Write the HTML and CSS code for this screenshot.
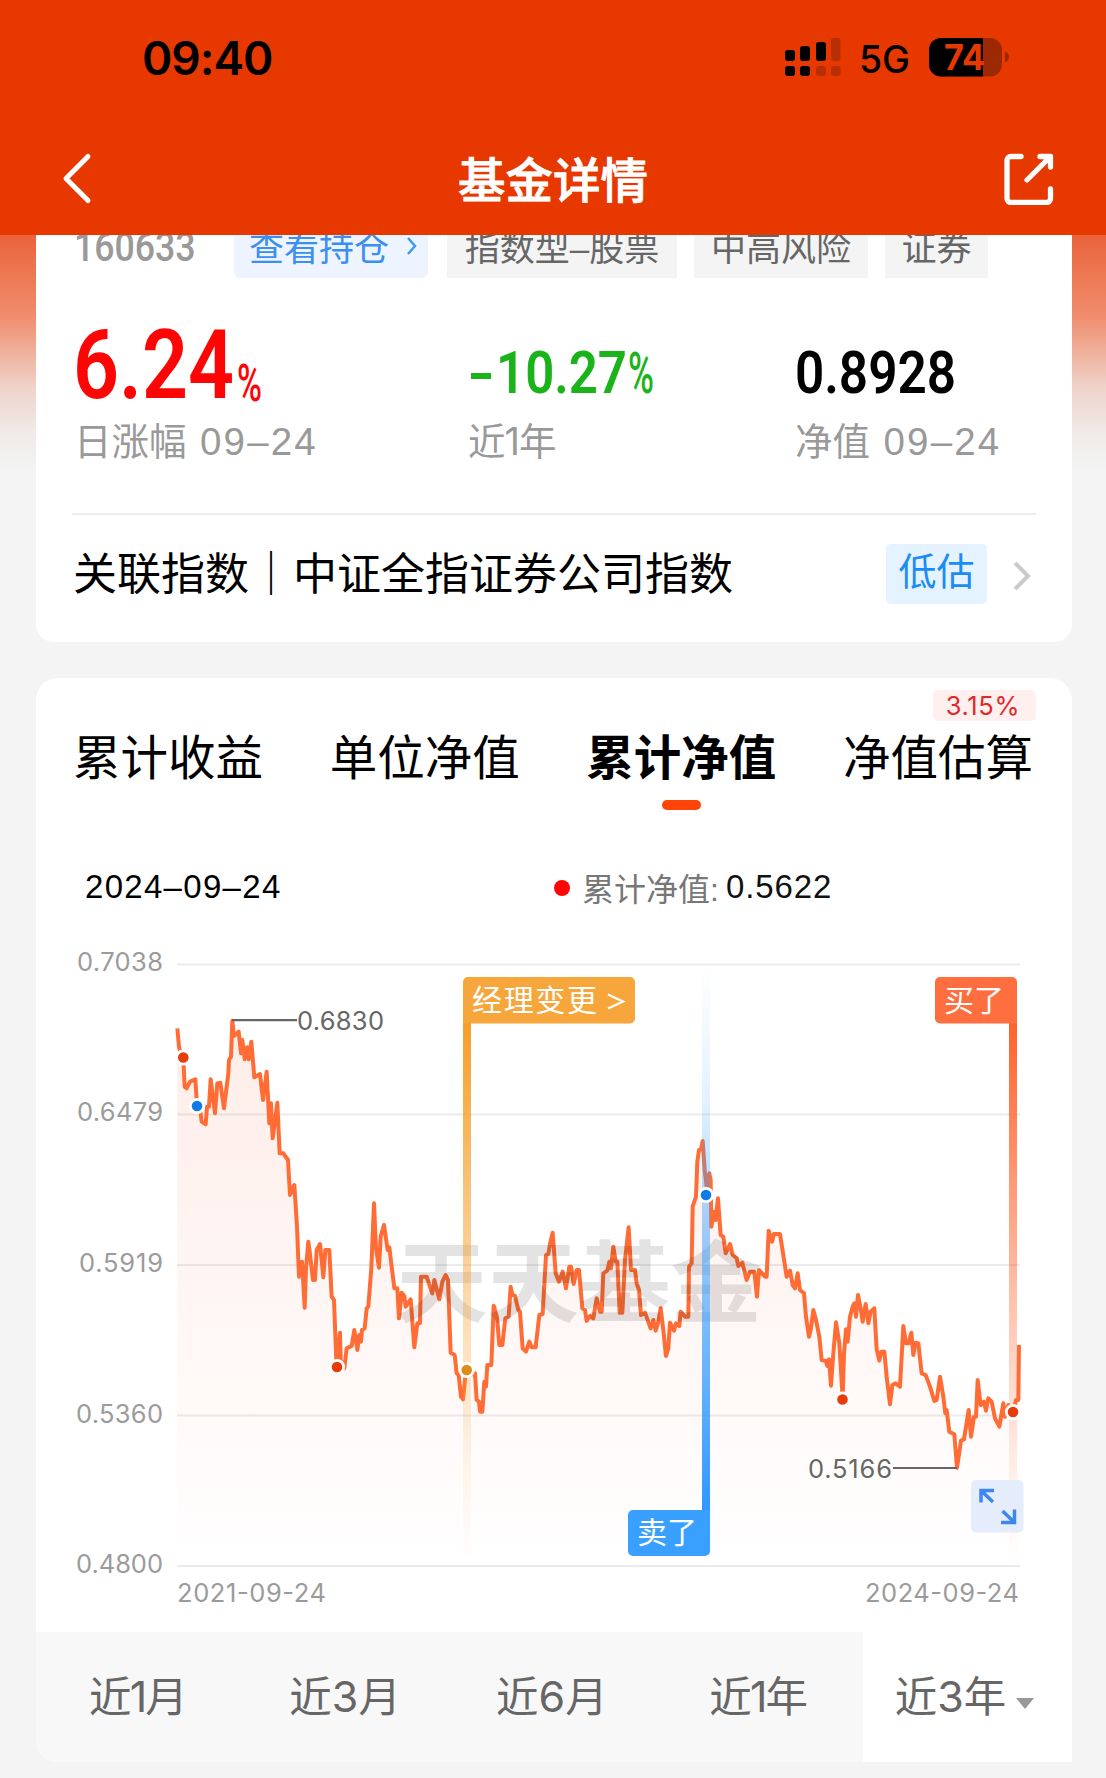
FILE: index.html
```html
<!DOCTYPE html>
<html lang="zh-CN">
<head>
<meta charset="utf-8">
<title>基金详情</title>
<link rel="stylesheet" href="styles.css">
</head>
<body>
<header class="topbar">
  <div class="status">
    <span class="clock">09:40</span>
    <svg class="status-icons" width="230" height="50" viewBox="782 32 230 50">
      <g fill="#000">
        <rect x="785" y="50" width="10" height="11" rx="3"/><rect x="800" y="46" width="10" height="15" rx="3"/><rect x="816" y="42" width="10" height="19" rx="3"/>
        <rect x="785" y="66" width="10" height="10" rx="3"/><rect x="800" y="66" width="10" height="10" rx="3"/>
      </g>
      <g fill="#b82e05">
        <rect x="831" y="38" width="9.500" height="23" rx="3"/><rect x="816" y="66" width="10" height="10" rx="3"/><rect x="831" y="66" width="9.500" height="10" rx="3"/>
      </g>
      <text x="859" y="73" class="net" textLength="51" lengthAdjust="spacingAndGlyphs">5G</text>
      <rect x="929" y="38" width="73" height="38.500" rx="12" fill="#9c2804"/>
      <path d="M983 38H941a12 12 0 0 0-12 12v14.500a12 12 0 0 0 12 12h42z" fill="#000"/>
      <path d="M1005 51.500q4 1.500 4 5.500t-4 5.500z" fill="#9c2804"/>
      <text x="944" y="70" class="batt" textLength="41" lengthAdjust="spacingAndGlyphs">74</text>
    </svg>
  </div>
  <nav class="nav">
    <svg width="32" height="54" viewBox="60 151 32 54" class="ico"><path d="M88 156.500 66 178.500l22 22" stroke-width="5"/></svg>
    <h1 class="title">基金详情</h1>
    <svg width="56" height="54" viewBox="1001 151 56 54" class="ico"><path d="M1021 156.500h-10a4 4 0 0 0-4 4v38a4 4 0 0 0 4 4h35.500a4 4 0 0 0 4-4V189M1040 156.500h10.500V167M1050 157l-23 23" stroke-width="5.300"/></svg>
  </nav>
</header>
<main class="page">
  <section class="card summary">
    <div class="tags">
      <span class="code"><span>160633</span></span>
      <span class="tag link">查看持仓<svg width="12" height="20" viewBox="0 0 12 20"><path d="M2 2l7 8-7 8" fill="none" stroke="#3a9df5" stroke-width="2.500"/></svg></span>
      <span class="tag type">指数型–股票</span>
      <span class="tag risk">中高风险</span>
      <span class="tag sector">证券</span>
    </div>
    <div class="stats">
      <div class="stat"><svg class="num" width="200" height="80" viewBox="0 0 200 80"><g fill="#fe0505"><text x="-1" y="74" class="big" textLength="161" lengthAdjust="spacingAndGlyphs">6.24</text><text x="163" y="77" class="pct" textLength="25" lengthAdjust="spacingAndGlyphs">%</text></g></svg><p>日涨幅 <i>09–24</i></p></div>
      <div class="stat"><svg class="num" width="200" height="80" viewBox="0 0 200 80"><g fill="#1ab41a"><rect x="3" y="49" width="20" height="6"/><text x="28" y="68.500" class="mid" textLength="131" lengthAdjust="spacingAndGlyphs">10.27</text><text x="160" y="68.500" class="pct mp" textLength="26" lengthAdjust="spacingAndGlyphs">%</text></g></svg><p>近<i class="one">1</i>年</p></div>
      <div class="stat"><svg class="num" width="200" height="80" viewBox="0 0 200 80"><text x="0" y="68.500" class="mid" textLength="161" lengthAdjust="spacingAndGlyphs">0.8928</text></svg><p>净值 <i>09–24</i></p></div>
    </div>
    <div class="index-row">
      <span class="index-name">关联指数｜中证全指证券公司指数</span>
      <span class="level">低估</span>
      <svg width="20" height="32" viewBox="0 0 20 32"><path d="M3 3l13 13L3 29" fill="none" stroke="#c9c9c9" stroke-width="4"/></svg>
    </div>
  </section>

  <section class="card trend">
    <div class="tabs">
      <span>累计收益</span><span>单位净值</span><span class="on">累计净值</span><span>净值估算<b class="badge">3.15%</b></span>
    </div>
    <div class="legend">
      <span class="date">2024–09–24</span><span class="dot"></span><span class="lname">累计净值:</span><span class="lval">0.5622</span>
    </div>
    <svg class="chart" width="1036" height="702" viewBox="36 930 1036 702">
      <defs>
        <linearGradient id="area" x1="0" y1="0" x2="0" y2="1"><stop offset="0" stop-color="#f4592a" stop-opacity=".11"/><stop offset="1" stop-color="#f4592a" stop-opacity="0"/></linearGradient>
        <linearGradient id="org" x1="0" y1="0" x2="0" y2="1"><stop offset="0" stop-color="#f59f2a"/><stop offset=".5" stop-color="#f59f2a" stop-opacity=".4"/><stop offset=".8" stop-color="#f59f2a" stop-opacity=".1"/><stop offset="1" stop-color="#f59f2a" stop-opacity="0"/></linearGradient>
        <linearGradient id="red" x1="0" y1="0" x2="0" y2="1"><stop offset="0" stop-color="#ff622b"/><stop offset=".5" stop-color="#ff622b" stop-opacity=".4"/><stop offset=".8" stop-color="#ff622b" stop-opacity=".1"/><stop offset="1" stop-color="#ff622b" stop-opacity="0"/></linearGradient>
        <linearGradient id="blu" x1="0" y1="1" x2="0" y2="0"><stop offset="0" stop-color="#2f98ff"/><stop offset=".5" stop-color="#3a9fff" stop-opacity=".5"/><stop offset=".75" stop-color="#3a9fff" stop-opacity=".14"/><stop offset="1" stop-color="#3a9fff" stop-opacity="0"/></linearGradient>
      </defs>
      <path d="M177 964.500H1020M177 1114.500H1020M177 1265H1020M177 1415.500H1020M177 1566H1020" stroke="#ebebeb" stroke-width="1.800"/>
      <g transform="translate(160 940) scale(.33333)">
        <path id="nav-fill" fill="url(#area)" d="M52 1878L52 265 57 320 63 345 70 355 74 440 80 445 90 425 106 418 111 495 122 520 125 545 137 553 141 500 147 500 152 418 165 520 172 430 181 428 192 505 205 400 207 360 213 350 217 242 222 288 236 275 243 340 247 300 254 358 261 322 266 358 274 305 283 412 300 402 309 480 320 395 328 550 333 490 338 595 352 488 359 640 370 640 384 660 390 765 403 735 411 860 417 1010 426 965 434 1103 438 985 445 905 459 1020 465 1020 470 930 480 912 490 1012 496 930 508 930 515 1070 522 1080 530 1290 540 1178 553 1285 560 1225 575 1218 583 1170 592 1230 606 1170 614 1165 625 1100 634 985 642 790 657 983 662 890 672 855 683 930 703 1045 712 1045 717 1135 725 1058 752 1078 763 1222 772 1150 783 1010 800 1010 817 1060 838 1078 857 1005 864 1020 872 1238 884 1245 909 1378 917 1300 945 1300 960 1415 967 1415 982 1275 994 1275 1001 1097 1018 1215 1027 1215 1052 1040 1080 1115 1098 1235 1127 1222 1138 1125 1148 1122 1158 945 1178 878 1187 1000 1218 1045 1228 980 1257 990 1280 1143 1300 1135 1320 1115 1330 1000 1348 965 1360 920 1372 965 1379 1118 1387 1118 1395 960 1406 862 1413 990 1425 990 1443 1125 1487 1172 1502 1105 1518 1248 1530 1148 1558 1158 1585 1130 1587 980 1598 800 1608 770 1628 603 1640 740 1648 700 1654 860 1674 775 1682 885 1697 940 1710 912 1735 978 1760 1020 1783 995 1791 1070 1797 990 1820 1010 1826 872 1860 882 1880 1010 1932 1060 1947 1190 1960 1110 1978 1190 1985 1260 2007 1258 2013 1337 2028 1147 2048 1375 2058 1168 2078 1100 2094 1065 2125 1150 2143 1105 2150 1228 2173 1235 2190 1393 2197 1335 2220 1340 2230 1158 2275 1210 2285 1300 2323 1383 2340 1310 2368 1475 2383 1483 2391 1583 2403 1502 2426 1410 2433 1490 2453 1320 2478 1412 2495 1385 2518 1460 2530 1390 2560 1415 2575 1380 2577 1215V1878Z"/>
        <path fill="none" stroke="#ff6c35" stroke-width="12" stroke-linejoin="round" d="M52 265L57 320 63 345 70 355 74 440 80 445 90 425 106 418 111 495 122 520 125 545 137 553 141 500 147 500 152 418 165 520 172 430 181 428 192 505 205 400 207 360 213 350 217 242 222 288 236 275 243 340 247 300 254 358 261 322 266 358 274 305 283 412 300 402 309 480 320 395 328 550 333 490 338 595 352 488 359 640 370 640 384 660 390 765 403 735 411 860 417 1010 426 965 434 1103 438 985 445 905 452 960 459 1020 465 1020 470 930 480 912 490 1012 496 930 508 930 515 1070 522 1080 530 1290 540 1178 543 1290 553 1285 560 1225 575 1218 583 1170 592 1230 598 1185 603 1205 606 1170 614 1165 620 1105 625 1100 634 985 642 790 648 925 657 983 662 890 672 855 683 930 688 922 703 1045 712 1045 717 1135 725 1058 733 1068 737 1100 752 1078 763 1222 772 1150 780 1150 783 1010 800 1010 817 1060 823 1020 838 1078 847 1025 857 1005 864 1020 872 1238 884 1245 890 1300 896 1305 903 1370 909 1378 917 1300 920 1290 928 1305 945 1300 950 1380 957 1385 960 1415 967 1415 973 1325 978 1340 982 1275 994 1275 1001 1097 1011 1132 1018 1215 1027 1215 1036 1135 1046 1130 1052 1040 1057 1065 1065 1068 1075 1110 1080 1115 1088 1225 1098 1235 1108 1205 1115 1222 1127 1222 1138 1125 1148 1122 1158 945 1165 942 1170 912 1178 878 1187 1000 1197 1025 1208 995 1218 1045 1228 980 1233 980 1241 1032 1250 990 1257 990 1267 1105 1275 1110 1280 1143 1290 1128 1300 1135 1310 1075 1320 1115 1325 1115 1330 1000 1342 992 1348 965 1353 985 1360 920 1367 965 1372 965 1379 1118 1387 1118 1395 960 1406 862 1413 990 1425 990 1430 1030 1437 1050 1443 1125 1455 1118 1472 1165 1480 1140 1487 1172 1495 1145 1502 1105 1510 1170 1518 1248 1525 1225 1530 1148 1542 1172 1548 1150 1558 1158 1562 1115 1575 1130 1585 1130 1587 980 1595 970 1598 800 1608 770 1612 665 1617 630 1623 628 1628 603 1634 690 1640 740 1648 700 1652 720 1654 860 1662 815 1667 840 1674 775 1682 885 1690 890 1697 940 1710 912 1718 945 1730 955 1735 978 1747 968 1760 1020 1770 995 1783 995 1791 1070 1797 990 1815 1010 1820 1010 1826 872 1836 905 1842 882 1860 882 1880 1010 1890 992 1898 1035 1905 1045 1913 1000 1920 1050 1932 1060 1938 1130 1947 1190 1953 1165 1960 1110 1968 1140 1978 1190 1985 1260 1997 1262 2002 1278 2007 1258 2013 1337 2020 1240 2028 1147 2038 1210 2048 1375 2052 1240 2058 1168 2063 1205 2070 1130 2078 1100 2083 1090 2088 1130 2094 1065 2102 1105 2108 1145 2117 1092 2125 1150 2132 1115 2143 1105 2150 1228 2158 1262 2164 1235 2173 1235 2180 1310 2190 1393 2197 1335 2207 1330 2220 1340 2230 1158 2238 1210 2246 1210 2254 1178 2260 1245 2267 1208 2275 1210 2285 1300 2297 1305 2310 1340 2323 1383 2330 1380 2340 1310 2350 1370 2356 1420 2360 1410 2368 1475 2383 1483 2391 1583 2403 1502 2412 1498 2426 1410 2433 1490 2442 1430 2448 1430 2453 1320 2462 1395 2472 1385 2478 1412 2485 1375 2495 1385 2505 1435 2518 1460 2530 1390 2535 1430 2545 1395 2560 1415 2568 1380 2575 1380 2577 1215"/>
      </g>
      <text class="wm" x="396" y="1315" textLength="366" lengthAdjust="spacingAndGlyphs">天天基金</text>
      <rect x="463" y="1023" width="8" height="543" fill="url(#org)"/>
      <rect x="702" y="965" width="8" height="545" fill="url(#blu)"/>
      <rect x="1009" y="1023" width="8" height="543" fill="url(#red)"/>
      <path d="M463 1023.500V982a5 5 0 0 1 5-5H630a5 5 0 0 1 5 5v36.500a5 5 0 0 1-5 5Z" fill="#f7a63c"/>
      <path d="M1017 1023.500V982a5 5 0 0 0-5-5H940a5 5 0 0 0-5 5v36.500a5 5 0 0 0 5 5Z" fill="#ff6e3f"/>
      <path d="M710 1510V1551a5 5 0 0 1-5 5H633a5 5 0 0 1-5-5V1515a5 5 0 0 1 5-5Z" fill="#3aa0ff"/>
      <g class="flag"><text x="472" y="1010.500" textLength="125">经理变更</text><path d="M608 994.500l15 7-15 7" fill="none" stroke="#fff" stroke-width="2.300"/><text x="944" y="1010.500" textLength="60">买了</text><text x="637" y="1543" textLength="60">卖了</text></g>
      <path d="M232 1020.200H297M893 1468H957" stroke="#666" stroke-width="2.200"/>
      <g class="axis">
        <text x="77" y="971" textLength="86">0.7038</text><text x="77" y="1121" textLength="86">0.6479</text><text x="79" y="1272" textLength="84">0.5919</text><text x="76" y="1422.500" textLength="87">0.5360</text><text x="76" y="1573" textLength="87">0.4800</text>
        <text x="177" y="1601.500" textLength="149">2021-09-24</text><text x="865" y="1601.500" textLength="154">2024-09-24</text>
      </g>
      <g class="axis peak"><text x="297" y="1029.500" textLength="87">0.6830</text><text x="808" y="1477.500" textLength="84">0.5166</text></g>
      <g stroke="#fff" stroke-width="2.800">
        <g fill="#e63c0a"><circle cx="183.300" cy="1057.500" r="6.700"/><circle cx="337" cy="1367" r="6.700"/><circle cx="842.500" cy="1399.500" r="6.700"/><circle cx="1013" cy="1412" r="6.700"/></g>
        <g fill="#0f7be6"><circle cx="197" cy="1106" r="6.700"/><circle cx="706" cy="1195" r="6.700"/></g>
        <circle cx="466.700" cy="1370" r="6.700" fill="#de8d18"/>
      </g>
      <rect x="971" y="1480" width="52.500" height="52.500" rx="5" fill="#e3ecfc" fill-opacity=".92"/>
      <path d="M981 1502.500V1490.500H994M982 1491.500l11 10.500M1014.500 1509.500V1522.500H1001M1002.500 1511l11 10.500" fill="none" stroke="#3f87f0" stroke-width="3.500"/>
    </svg>
    <div class="ranges">
      <span>近<i class="one">1</i>月</span><span>近<i>3</i>月</span><span>近<i>6</i>月</span><span>近<i class="one">1</i>年</span><span class="on">近<i>3</i>年<b class="caret"></b></span>
    </div>
  </section>
</main>
</body>
</html>
```
FILE: styles.css
```css
* { box-sizing: border-box; margin: 0; padding: 0; }
body {
  width: 1106px; height: 1778px; overflow: hidden;
  background: #f4f4f4;
  font-family: "Liberation Sans", "Noto Sans CJK SC", sans-serif;
  color: #000; white-space: nowrap;
}
i { font-style: normal; }

.topbar { height: 235px; background: #e73800; }
.status { height: 116px; padding: 32px 94px 0 142px; display: flex; justify-content: space-between; }
.clock { font: 600 46px/52px Inter, sans-serif; letter-spacing: -1px; }
.net { font: 500 38px Inter, sans-serif; }
.batt { font: 700 36px Inter, sans-serif; fill: #e73800; }
.nav { height: 119px; padding: 4px 49px 0 60px; display: flex; align-items: center; justify-content: space-between; }
.ico { fill: none; stroke: #fff; stroke-linecap: round; stroke-linejoin: round; }
.title { font: 500 47.5px/60px "Noto Sans CJK SC", sans-serif; color: #fff; margin: 1px 0 0 13px; -webkit-text-stroke: .8px #fff; }

.page {
  height: 1543px; padding: 0 34px 0 36px; overflow: hidden;
  background: linear-gradient(#e9633b 0, #f08c6c 80px, #efd5cc 155px, #f0eae8 198px, #f4f4f4 235px);
}
.card { width: 1036px; background: #fff; overflow: hidden; }
.summary { height: 407px; border-radius: 0 0 18px 18px; }

.tags { height: 43px; padding-left: 38px; display: flex; align-items: flex-end; }
.code { width: 160px; height: 43px; }
.code span { display: inline-block; transform: scaleX(.87); transform-origin: 0 0; font: 500 41px/44px Roboto, sans-serif; margin-top: -10px; color: #999; }
.tag { height: 62px; line-height: 66px; font-size: 35px; color: #666; background: #f4f4f4; text-align: center; }
.link { width: 194px; color: #3a8ff0; background: #eef4ff; border-radius: 6px; margin-right: 19px; padding-left: 5px; }
.link svg { margin-left: 17px; vertical-align: 5px; }
.type { width: 230px; margin-right: 17px; }
.risk { width: 174px; margin-right: 17px; }
.sector { width: 103px; }

.stats { height: 235px; display: grid; grid-template-columns: 394px 327px 1fr; padding: 46px 0 0 38px; }
.num { display: block; font-family: Roboto, sans-serif; }
.big { font-size: 97px; font-weight: 600; }
.mid { font-size: 59px; font-weight: 600; }
.pct { font-size: 52px; font-weight: 500; }
.mp { font-size: 58px; }
.stats p { font-size: 37.5px; line-height: 50px; color: #999; margin-top: 13px; }
.stats i { letter-spacing: 2.200px; font-size: 38.500px; margin-left: 3px; }
.stats i.one { font: 400 38px Inter, sans-serif; letter-spacing: 0; margin: 0 -1px 0 -1px; }

.index-row { margin: 0 36px; height: 129px; border-top: 2px solid #ededed; display: flex; align-items: center; padding: 0 4px 10px 2px; }
.index-name { font-size: 44px; line-height: 60px; margin: 2px 0 0 -1px; }
.level { margin-left: 153px; margin-right: 25px; width: 101px; height: 60px; line-height: 57px; border-radius: 5px; text-align: center; font-size: 38px; color: #1a8cf5; background: #e5f2ff; }
.index-row svg { margin-top: 5px; }

.trend { margin-top: 36px; height: 1084px; border-radius: 22px 22px 0 22px; }
.tabs { height: 132px; padding: 51px 39px 0 37px; display: flex; justify-content: space-between; font-size: 47.5px; line-height: 60px; }
.tabs span { position: relative; }
.tabs .on { font-weight: 700; }
.tabs .on::after { content: ""; position: absolute; left: 76px; top: 71px; width: 39px; height: 10px; border-radius: 5px; background: #ff4408; }
.badge { position: absolute; right: -3px; top: -39px; width: 103px; height: 31px; border-radius: 5px; background: #ffefef; color: #e02a2a; font: 400 25.500px/31px Inter, sans-serif; letter-spacing: .6px; text-align: center; padding-right: 3px; }

.legend { height: 120px; padding: 34px 0 0 49px; display: flex; align-items: center; font-size: 33px; }
.date { width: 469px; letter-spacing: 1.300px; }
.dot { width: 16px; height: 16px; border-radius: 50%; background: #fe0505; margin-right: 12px; margin-top: 2px; }
.lname { font-size: 32px; color: #777; width: 144px; }
.lval { letter-spacing: .9px; color: #111; }

.chart { display: block; }
.axis { font: 400 25.500px Inter, sans-serif; fill: #9b9b9b; }
.peak { fill: #666; }
.flag { font: 400 30px "Noto Sans CJK SC", sans-serif; fill: #fff; }
.wm { font: 700 89px "Noto Sans CJK SC", sans-serif; fill: #000; fill-opacity: .11; }

.ranges { height: 130px; display: flex; background: #f8f8f8; font-size: 42.500px; color: #666; }
.ranges span { width: 206.750px; height: 130px; line-height: 131px; text-align: center; padding-right: 2px; }
.ranges i { font: 400 43px/60px Inter, sans-serif; }
.ranges i.one { margin: 0 -2px; }
.ranges .on { width: 209px; background: #fff; padding-right: 6px; }
.caret { display: inline-block; margin-left: 10px; vertical-align: 3px; border: 9px solid transparent; border-top: 11px solid #999; border-bottom: 0; }
```
